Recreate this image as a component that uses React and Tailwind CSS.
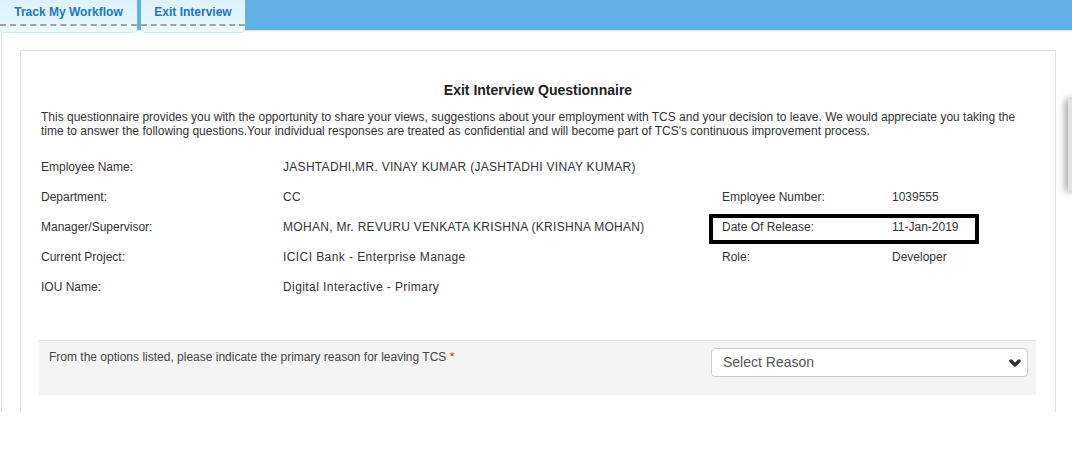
const font = { fontFamily: '"Liberation Sans", Arial, sans-serif' };

const rows = [
  { label: 'Employee Name:', value: 'JASHTADHI,MR. VINAY KUMAR (JASHTADHI VINAY KUMAR)', wide: true },
  { label: 'Department:', value: 'CC', rLabel: 'Employee Number:', rValue: '1039555' },
  { label: 'Manager/Supervisor:', value: 'MOHAN, Mr. REVURU VENKATA KRISHNA (KRISHNA MOHAN)', rLabel: 'Date Of Release:', rValue: '11-Jan-2019', marked: true, wide: true },
  { label: 'Current Project:', value: 'ICICI Bank - Enterprise Manage', rLabel: 'Role:', rValue: 'Developer' },
  { label: 'IOU Name:', value: 'Digital Interactive - Primary' },
];

const Tab = ({ label, width }) => (
  <div className={`${width} h-[33px] rounded-b-[4px] bg-gradient-to-b from-[#dcf2fc] to-[#e9f9fe] border-b border-[#d3e7f0] relative z-10`}>
    <div className="h-[26px] border-b-2 border-dashed border-[#a3a3a3] flex items-center justify-center text-[12px] font-bold text-[#1a78c2]">
      {label}
    </div>
  </div>
);

const App = () => {
  return (
    <div className="w-[1072px] h-[460px] bg-white relative overflow-hidden text-[#333]" style={font}>
      {/* Top tab bar */}
      <div className="h-[30px] bg-[#62b0e5] flex items-start gap-[4px]">
        <Tab label="Track My Workflow" width="w-[137px]" />
        <Tab label="Exit Interview" width="w-[104px]" />
      </div>

      {/* Page */}
      <div className="h-[382px] ml-[1px] border-l border-t border-[#e2e2e2] pt-[19px] pl-[18px] pr-[16px]">
        <div className="h-full w-[1036px] border-l border-t border-r border-[#e2e2e2] pt-[30px]">
          <h1 className="text-[14px] font-bold text-center leading-[18px] text-[#222]">Exit Interview Questionnaire</h1>
          <p className="mt-[11px] px-[20px] text-[12px] leading-[14px]">
            This questionnaire provides you with the opportunity to share your views, suggestions about your employment with TCS and your decision to leave. We would appreciate you taking the time to answer the following questions.Your individual responses are treated as confidential and will become part of TCS's continuous improvement process.
          </p>

          <div className="mt-[14px] pl-[20px]">
            {rows.map((r) => (
              <div key={r.label} className="grid grid-cols-[242px_439px_170px_1fr] h-[30px] items-center text-[12px]">
                <div>{r.label}</div>
                <div className={`whitespace-nowrap ${r.wide ? 'tracking-[0.3px]' : 'tracking-[0.42px]'}`}>{r.value}</div>
                <div className="relative">
                  {r.marked && (
                    <div className="absolute left-[-13px] top-[-4px] w-[270px] h-[30px] border-[4px] border-black" />
                  )}
                  {r.rLabel}
                </div>
                <div>{r.rValue}</div>
              </div>
            ))}
          </div>

          {/* Reason panel */}
          <div className="mt-[38px] ml-[18px] mr-[19px] h-[55px] bg-[#f4f4f4] border-t border-[#dcdcdc] flex justify-between items-start pl-[10px] pr-[8px] pt-[7px]">
            <div className="text-[12px] leading-[16px] pt-[1px] text-[#444]">
              From the options listed, please indicate the primary reason for leaving TCS <span className="text-[#e02020]">*</span>
            </div>
            <div className="w-[317px] h-[29px] bg-white border border-[#cccccc] rounded-[4px] flex items-center justify-between pl-[11px] pr-[6px]">
              <span className="text-[14px] text-[#555]">Select Reason</span>
              <svg width="12" height="9" viewBox="0 0 12 9" className="mt-[1px]">
                <path d="M2 2 L6 6 L10 2" fill="none" stroke="#333" strokeWidth="3.4" strokeLinecap="round" strokeLinejoin="round" />
              </svg>
            </div>
          </div>
        </div>
      </div>

      {/* Floating edge element, clipped */}
      <div className="absolute left-[1068px] top-[99px] w-[20px] h-[92px] bg-[#e3e3e3] shadow-[-3px_0_7px_rgba(0,0,0,0.35)]" />
    </div>
  );
};

export default App;
